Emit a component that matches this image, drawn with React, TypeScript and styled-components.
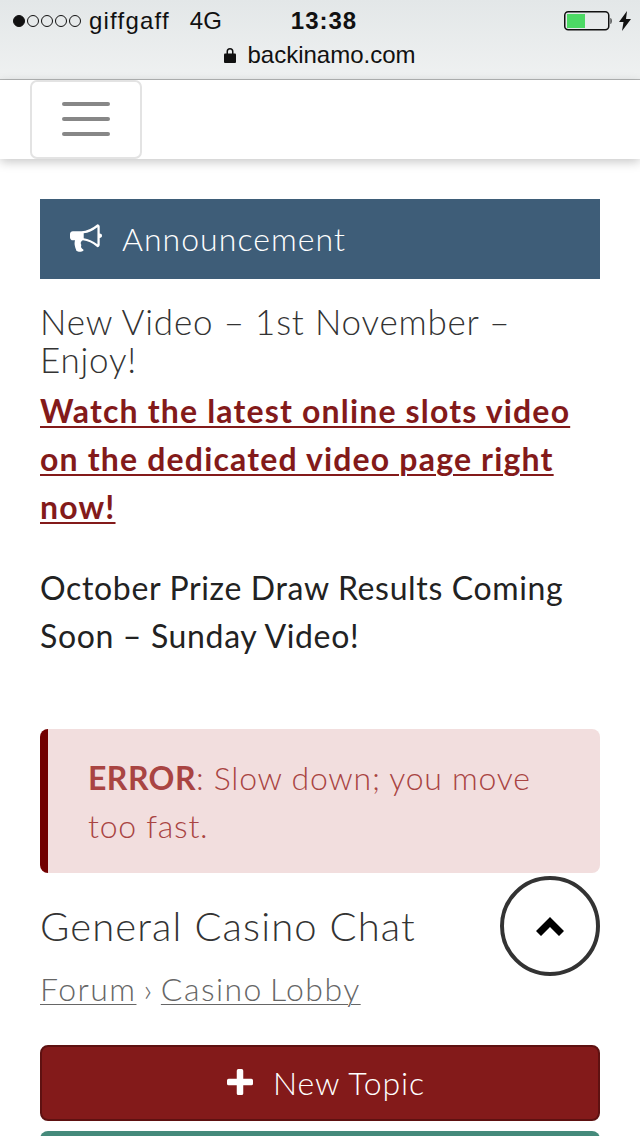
import React from "react";
import styled, { createGlobalStyle } from "styled-components";

const Global = createGlobalStyle`
  html, body { margin: 0; padding: 0; background: #fff; }
  body { font-family: "Lato", "Open Sans", sans-serif; }
`;

const Page = styled.div`
  position: relative;
  width: 640px;
  height: 1136px;
  overflow: hidden;
  background: #fff;
`;

const BrowserBar = styled.header`
  height: 79px;
  border-bottom: 1px solid #b4b6b6;
  background: linear-gradient(#e3e7e8, #eff1f1);
  font-family: "Liberation Sans", Arial, sans-serif;
  color: #111;
`;

const StatusRow = styled.div`
  height: 42px;
  padding: 0 9px 0 13px;
  display: grid;
  grid-template-columns: 1fr auto 1fr;
  align-items: center;
  font-size: 24px;
`;

const Carrier = styled.div`
  display: flex;
  align-items: center;
`;

const Dot = styled.span<{ $on?: boolean }>`
  width: 12px;
  height: 12px;
  margin-right: 2px;
  box-sizing: border-box;
  border-radius: 50%;
  border: 1px solid #111;
  background: ${(p) => (p.$on ? "#111" : "transparent")};
`;

const CarrierText = styled.span`
  margin-left: 6px;
  letter-spacing: 1.2px;
`;

const Network = styled.span`
  margin-left: 20px;
`;

const Clock = styled.div`
  margin-left: 4px;
  font-weight: 700;
  letter-spacing: 1px;
`;

const Power = styled.div`
  justify-self: end;
  display: flex;
  align-items: center;
  gap: 7px;
`;

const UrlRow = styled.div`
  display: flex;
  justify-content: center;
  align-items: center;
  gap: 11px;
  height: 26px;
  font-size: 24px;
`;

const Nav = styled.nav`
  position: relative;
  z-index: 1;
  height: 79px;
  padding-left: 30px;
  background: #fff;
  box-shadow: 0 3px 10px rgba(0, 0, 0, 0.22);
`;

const MenuButton = styled.button`
  width: 112px;
  height: 79px;
  padding: 0 0 1px;
  box-sizing: border-box;
  border: 2px solid #e3e3e3;
  border-radius: 7px;
  background: #fff;
  display: flex;
  flex-direction: column;
  align-items: center;
  justify-content: center;
  gap: 11px;
`;

const MenuLine = styled.span`
  width: 48px;
  height: 4px;
  border-radius: 2px;
  background: #878787;
`;

const Content = styled.main`
  padding: 40px 40px 0;
`;

const Banner = styled.div`
  height: 80px;
  box-sizing: border-box;
  padding: 0 0 2px 30px;
  display: flex;
  align-items: center;
  gap: 20px;
  background: #3e5d78;
  color: #fff;
  font-size: 32px;
  font-weight: 300;
  letter-spacing: 1.05px;
`;

const Headline = styled.h2`
  margin: 23px 0 0;
  font-size: 35px;
  line-height: 38px;
  font-weight: 300;
  letter-spacing: 0.8px;
  color: #333;
`;

const FeatureLink = styled.a`
  display: block;
  margin-top: 9px;
  font-size: 32px;
  line-height: 48px;
  font-weight: 700;
  letter-spacing: 1.17px;
  color: #831a1a;
  text-decoration: underline;
  text-decoration-thickness: 2px;
  text-underline-offset: 3px;
`;

const Note = styled.p`
  margin: 33px 0 0;
  font-size: 32px;
  line-height: 48px;
  font-weight: 400;
  letter-spacing: 0.65px;
  color: #222;
`;

const ErrorBox = styled.div`
  height: 144px;
  margin-top: 69px;
  box-sizing: border-box;
  padding: 25px 40px 0;
  border-left: 8px solid #720000;
  border-radius: 8px;
  background: #f2dede;
  color: #a94442;
  font-size: 32px;
  line-height: 48px;
  font-weight: 300;
  letter-spacing: 0.75px;
`;

const ErrorLabel = styled.strong`
  font-weight: 700;
  letter-spacing: 0.45px;
`;

const Title = styled.h1`
  margin: 30px 0 0;
  font-size: 40px;
  line-height: 46px;
  font-weight: 300;
  letter-spacing: 1.1px;
  color: #333;
`;

const Crumbs = styled.div`
  margin-top: 20px;
  font-size: 32px;
  line-height: 40px;
  font-weight: 300;
  letter-spacing: 1.45px;
  word-spacing: -3px;
  color: #666;
`;

const CrumbLink = styled.a`
  color: #666;
  text-decoration: underline;
  text-decoration-thickness: 1px;
  text-underline-offset: 3px;
`;

const PrimaryButton = styled.button`
  width: 560px;
  height: 76px;
  margin-top: 36px;
  display: flex;
  align-items: center;
  justify-content: center;
  gap: 20px;
  box-sizing: border-box;
  padding: 0 0 2px 12px;
  border: 2px solid #5e1111;
  border-radius: 8px;
  background: #831a1a;
  color: #fff;
  font-family: "Lato", sans-serif;
  font-size: 32px;
  font-weight: 300;
  letter-spacing: 0.9px;
`;

const SecondaryEdge = styled.div`
  width: 560px;
  height: 20px;
  margin-top: 10px;
  border-radius: 8px 8px 0 0;
  background: #458a7b;
`;

const TopButton = styled.button`
  position: absolute;
  left: 500px;
  top: 876px;
  width: 100px;
  height: 100px;
  padding: 0;
  box-sizing: border-box;
  border: 4px solid #333;
  border-radius: 50%;
  background: #fff;
  display: flex;
  align-items: center;
  justify-content: center;
`;

export default function App() {
  return (
    <Page>
      <Global />
      <BrowserBar>
        <StatusRow>
          <Carrier>
            <Dot $on /><Dot /><Dot /><Dot /><Dot />
            <CarrierText>giffgaff</CarrierText>
            <Network>4G</Network>
          </Carrier>
          <Clock>13:38</Clock>
          <Power>
            <svg width="48" height="20" viewBox="0 0 48 20">
              <rect x="0.75" y="0.75" width="44" height="18" rx="3.5" fill="none" stroke="#111" strokeWidth="1.5" />
              <rect x="3" y="3" width="18" height="14" fill="#4cd964" />
              <path d="M46.5 7c1.5.4 1.5 5.600 0 6z" fill="#111" />
            </svg>
            <svg width="12" height="20" viewBox="0 0 12 20">
              <path d="M8 0 0 11h4.500L3 20l9-12H7z" fill="#111" />
            </svg>
          </Power>
        </StatusRow>
        <UrlRow>
          <svg width="12" height="16" viewBox="0 0 12 16">
            <path d="M2.500 7V4.500a3.500 3.500 0 0 1 7 0V7H8V4.500a2 2 0 0 0-4 0V7z" fill="#111" />
            <rect y="6.500" width="12" height="9.500" rx="1" fill="#111" />
          </svg>
          <span>backinamo.com</span>
        </UrlRow>
      </BrowserBar>
      <Nav>
        <MenuButton aria-label="Menu">
          <MenuLine /><MenuLine /><MenuLine />
        </MenuButton>
      </Nav>
      <Content>
        <Banner>
          <svg width="32" height="32" viewBox="0 0 1792 1792">
            <path d="M1664 640q53 0 90.500 37.500t37.500 90.500-37.500 90.500-90.500 37.500v384q0 52-38 90t-90 38q-417-347-812-380-58 19-91 66t-31 100.500 40 92.500q-20 33-23 65.500t6 58 33.500 55 48 50 61.500 50.500q-29 58-111.500 83t-168.500 11.500-132-55.500q-7-23-29.500-87.500t-32-94.500-23-89-15-101 3.500-98.500 22-110.500h-122q-66 0-113-47t-47-113v-192q0-66 47-113t113-47h480q435 0 896-384 52 0 90 38t38 90v384zm-128 604v-954q-394 302-768 343v270q377 42 768 341z" fill="#fff" />
          </svg>
          <span>Announcement</span>
        </Banner>
        <Headline>New Video – 1st November – Enjoy!</Headline>
        <FeatureLink href="#">Watch the latest online slots video on the dedicated video page right now!</FeatureLink>
        <Note>October Prize Draw Results Coming Soon – Sunday Video!</Note>
        <ErrorBox>
          <ErrorLabel>ERROR</ErrorLabel>: Slow down; you move too fast.
        </ErrorBox>
        <Title>General Casino Chat</Title>
        <Crumbs>
          <CrumbLink href="#">Forum</CrumbLink> › <CrumbLink href="#">Casino Lobby</CrumbLink>
        </Crumbs>
        <PrimaryButton>
          <svg width="26" height="26" viewBox="0 0 24 24">
            <path d="M9 1.500A1.500 1.500 0 0 1 10.500 0h3A1.500 1.500 0 0 1 15 1.500V9h7.500A1.500 1.500 0 0 1 24 10.500v3a1.500 1.500 0 0 1-1.500 1.500H15v7.500a1.500 1.500 0 0 1-1.500 1.500h-3A1.500 1.500 0 0 1 9 22.500V15H1.500A1.500 1.500 0 0 1 0 13.500v-3A1.500 1.500 0 0 1 1.500 9H9z" fill="#fff" />
          </svg>
          <span>New Topic</span>
        </PrimaryButton>
        <SecondaryEdge />
      </Content>
      <TopButton aria-label="Back to top">
        <svg width="28" height="19" viewBox="0 0 28 19">
          <path d="M14 0 28 14l-5 5-9-9-9 9-5-5z" fill="#000" />
        </svg>
      </TopButton>
    </Page>
  );
}
